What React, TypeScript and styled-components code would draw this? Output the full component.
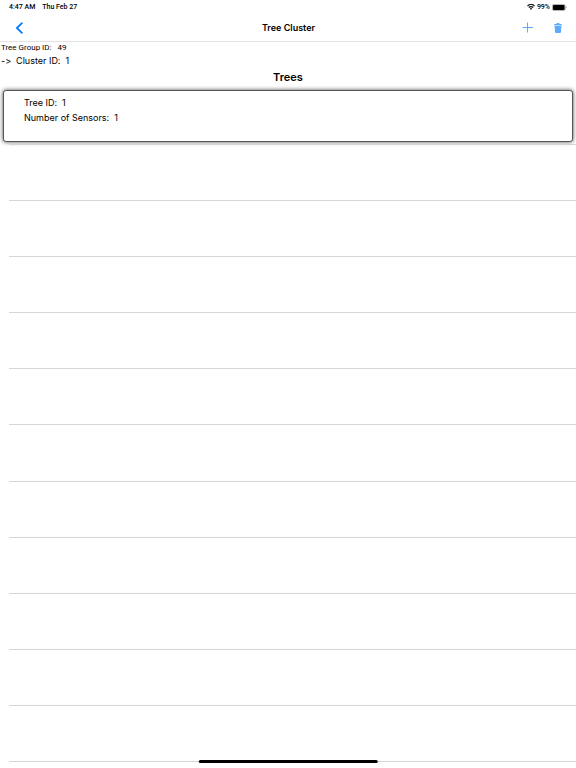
import React from "react";
import styled, { createGlobalStyle } from "styled-components";

const GlobalStyle = createGlobalStyle`
  * { box-sizing: border-box; }
  body {
    margin: 0;
    background: #fff;
    color: #000;
    font-family: Inter, "Liberation Sans", sans-serif;
    font-feature-settings: "calt" 0;
  }
`;

const Screen = styled.div`
  position: relative;
  display: flex;
  flex-direction: column;
  min-height: 100vh;
`;

const StatusBar = styled.div`
  display: flex;
  align-items: center;
  justify-content: space-between;
  height: 14px;
  padding: 0 9px;
  font-family: Roboto, "Liberation Sans", sans-serif;
  font-size: 7px;
  font-weight: 500;
  line-height: 14px;
`;

const StatusGroup = styled.div<{ $gap: number }>`
  display: flex;
  align-items: center;
  gap: ${(p) => p.$gap}px;
`;

const NavBar = styled.header`
  display: grid;
  grid-template-columns: 1fr auto 1fr;
  align-items: center;
  height: 28px;
  padding: 0 10px 0 11px;
  border-bottom: 1px solid #e2e2e2;
`;

const NavTitle = styled.h1`
  margin: 0;
  font-size: 9px;
  font-weight: 600;
  line-height: 14px;
`;

const NavActions = styled.div`
  display: flex;
  justify-content: flex-end;
  gap: 15px;
`;

const IconButton = styled.button`
  display: flex;
  align-items: center;
  justify-content: center;
  width: 16px;
  height: 20px;
  padding: 0;
  border: 0;
  background: none;
  cursor: pointer;
`;

const Field = styled.div<{ $small?: boolean }>`
  display: flex;
  gap: ${(p) => (p.$small ? 6 : 5)}px;
  font-family: ${(p) => (p.$small ? "Roboto" : "Inter")}, "Liberation Sans", sans-serif;
  font-size: ${(p) => (p.$small ? 8 : 9)}px;
  line-height: ${(p) => (p.$small ? 11 : 15)}px;
`;

const Details = styled.section`
  padding: 0 1px;
`;

const SectionTitle = styled.h2`
  margin: 0;
  padding-bottom: 2px;
  font-size: 11px;
  font-weight: 600;
  line-height: 18px;
  text-align: center;
`;

const TreeList = styled.ul`
  display: flex;
  flex: 1;
  flex-direction: column;
  margin: 0;
  padding: 0 0 6px;
  list-style: none;
`;

const TreeItem = styled.li`
  padding: 2px 3px;
`;

const TreeCard = styled.article`
  height: 52px;
  padding: 4px 20px;
  border: 1px solid #555;
  border-radius: 3px;
  background: #fff;
  box-shadow: 0 0 4px rgba(0, 0, 0, 0.7);
`;

const EmptyRow = styled.li`
  flex: 1;
  min-height: 40px;
  margin-left: 9px;
  border-bottom: 1px solid #d6d6d6;
`;

const Divider = styled.li`
  height: 1px;
  margin-left: 9px;
  background: #d6d6d6;
`;

const HomeIndicator = styled.div`
  position: absolute;
  bottom: 5px;
  left: 50%;
  width: 31%;
  height: 3px;
  border-radius: 2px;
  background: #000;
  transform: translateX(-50%);
`;

const WifiIcon = () => (
  <svg width="8" height="6" viewBox="0 0 16 12" fill="none" stroke="#111" strokeWidth="2.5" aria-hidden="true">
    <path d="M1 4.2C5-.1 11-.1 15 4.2M3.6 7.1c2.6-2.7 6.2-2.7 8.8 0" />
    <path d="M5.6 9.2c1.3-1.4 3.5-1.4 4.8 0L8 11.8z" fill="#111" stroke="none" />
  </svg>
);

const BatteryIcon = () => (
  <svg width="15" height="7" viewBox="0 0 15 7" aria-hidden="true">
    <rect x=".4" y=".4" width="12.8" height="6.2" rx="1.6" fill="none" stroke="#8b8b8b" strokeWidth=".7" />
    <rect x="1" y="1" width="11.6" height="5" rx="1" fill="#000" />
    <path d="M13.9 2.4v2.2q.8-.4.8-1.1t-.8-1.1" fill="#8b8b8b" />
  </svg>
);

const BackIcon = () => (
  <svg width="8" height="12" viewBox="0 0 8 12" fill="none" stroke="#087cff" strokeWidth="1.8" strokeLinecap="round" strokeLinejoin="round" aria-hidden="true">
    <path d="M6.9 1.2 1.9 6l5 4.8" />
  </svg>
);

const PlusIcon = () => (
  <svg width="12" height="12" viewBox="0 0 12 12" fill="#5eaaff" aria-hidden="true">
    <path d="M6 .5h1V5h5v1H7v4.5H6V6H1.5V5H6z" />
  </svg>
);

const TrashIcon = () => (
  <svg width="8" height="10" viewBox="0 0 8 10" fill="#5eaaff" aria-hidden="true">
    <path d="M2.5 1V.5q0-.5.5-.5h2q.5 0 .5.5V1h1.8q.6 0 .6.6v.7H.1v-.7q0-.6.6-.6z" />
    <path d="M.6 2.7h6.8l-.4 6.2q-.1 1.1-1.1 1.1H2.1q-1 0-1.1-1.1z" />
  </svg>
);

const EMPTY_ROWS = 11;

export default function App() {
  return (
    <Screen>
      <GlobalStyle />
      <StatusBar>
        <StatusGroup $gap={7}>
          <span>4:47 AM</span>
          <span>Thu Feb 27</span>
        </StatusGroup>
        <StatusGroup $gap={2}>
          <WifiIcon />
          <span>99%</span>
          <BatteryIcon />
        </StatusGroup>
      </StatusBar>
      <NavBar>
        <IconButton type="button" aria-label="Back"><BackIcon /></IconButton>
        <NavTitle>Tree Cluster</NavTitle>
        <NavActions>
          <IconButton type="button" aria-label="Add tree"><PlusIcon /></IconButton>
          <IconButton type="button" aria-label="Delete cluster"><TrashIcon /></IconButton>
        </NavActions>
      </NavBar>
      <main>
        <Details>
          <Field $small><span>Tree Group ID:</span><span>49</span></Field>
          <Field><span>-&gt;</span><span>Cluster ID:</span><span>1</span></Field>
        </Details>
        <SectionTitle>Trees</SectionTitle>
      </main>
      <TreeList>
        <TreeItem>
          <TreeCard>
            <Field><span>Tree ID:</span><span>1</span></Field>
            <Field><span>Number of Sensors:</span><span>1</span></Field>
          </TreeCard>
        </TreeItem>
        <Divider />
        {Array.from({ length: EMPTY_ROWS }, (_, i) => <EmptyRow key={i} />)}
      </TreeList>
      <HomeIndicator />
    </Screen>
  );
}
